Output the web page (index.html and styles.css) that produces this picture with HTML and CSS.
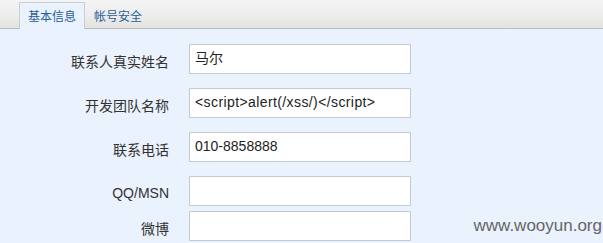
FILE: index.html
```html
<!DOCTYPE html>
<html>
<head>
<meta charset="utf-8">
<link rel="stylesheet" href="styles.css">
</head>
<body>
<div class="page">
  <div class="tabbar">
    <div class="tab active">基本信息</div>
    <div class="tab">帐号安全</div>
  </div>
  <div class="content">
    <div class="row">
      <label class="label">联系人真实姓名</label>
      <div class="field">马尔</div>
    </div>
    <div class="row">
      <label class="label">开发团队名称</label>
      <div class="field code">&lt;script&gt;alert(/xss/)&lt;/script&gt;</div>
    </div>
    <div class="row">
      <label class="label">联系电话</label>
      <div class="field">010-8858888</div>
    </div>
    <div class="row">
      <label class="label">QQ/MSN</label>
      <div class="field"></div>
    </div>
    <div class="row tight">
      <label class="label">微博</label>
      <div class="field"></div>
    </div>
  </div>
  <div class="watermark">www.wooyun.org</div>
</div>
</body>
</html>
```
FILE: styles.css
```css
html, body {
  margin: 0;
  padding: 0;
}
body {
  background: #eaf2fd;
  font-family: "Liberation Sans", "Noto Sans CJK SC", sans-serif;
  color: #333;
}
.page {
  position: relative;
  width: 603px;
  height: 243px;
  overflow: hidden;
}
.tabbar {
  height: 28px;
  border-bottom: 1px solid #b8bcc0;
  background: linear-gradient(#f4f4f4, #ededed 55%, #e2e2de);
  display: flex;
  align-items: flex-end;
  padding-left: 19px;
}
.tab {
  font-size: 12px;
  color: #2a5e98;
  height: 25px;
  line-height: 26px;
  padding: 0 8px;
  margin-bottom: -1px;
  border: 1px solid transparent;
  border-bottom: none;
}
.tab.active {
  background: #eaf2fd;
  border-color: #c6ced6;
  height: 26px;
  line-height: 28px;
  padding: 0 8px;
}
.content {
  padding-top: 15px;
  display: flex;
  flex-direction: column;
  gap: 14px;
}
.row {
  display: flex;
  align-items: center;
  gap: 20px;
  height: 30px;
}
.row.tight {
  margin-top: -9px;
}
.label {
  width: 169px;
  text-align: right;
  font-size: 14px;
  padding-top: 4px;
  color: #333;
}
.field {
  box-sizing: border-box;
  width: 222px;
  height: 30px;
  background: #fff;
  border: 1px solid #c4cad2;
  padding: 0 5px;
  font-size: 14px;
  line-height: 27px;
  color: #222;
  white-space: nowrap;
}
.field.code {
  letter-spacing: 0.4px;
}
.watermark {
  position: absolute;
  right: 1px;
  bottom: 8px;
  font-size: 17px;
  line-height: 19px;
  color: #666;
  font-family: "Liberation Sans", sans-serif;
}
```
